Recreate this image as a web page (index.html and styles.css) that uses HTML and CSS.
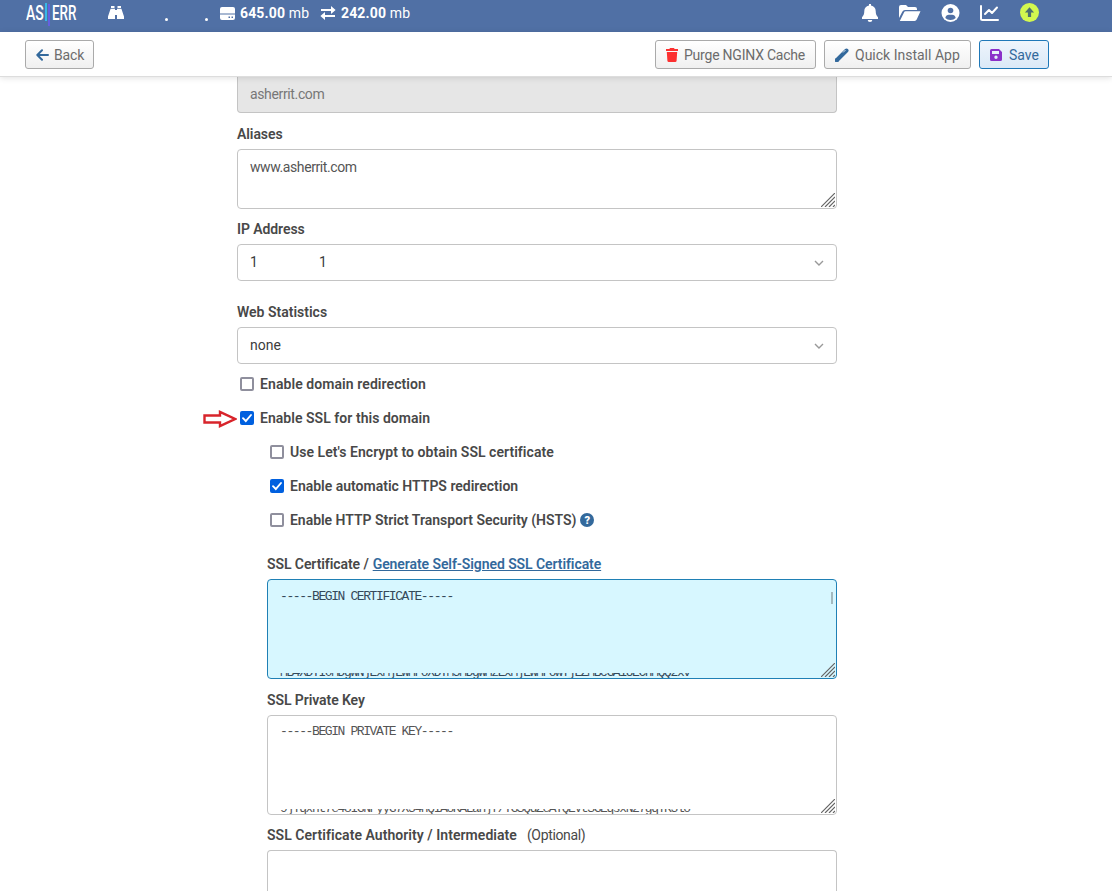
FILE: index.html
```html
<!DOCTYPE html>
<html lang="en">
<head>
<meta charset="utf-8">
<title>Edit Web Domain</title>
<link rel="stylesheet" href="styles.css">
</head>
<body>
<header class="topbar">
  <div class="logo"><span>AS</span><i class="bar cyan"></i><i class="bar violet"></i><span>ERR</span></div>
  <svg class="binoculars" width="16" height="14" viewBox="0 0 16 14"><path fill="#fff" d="M3 0h3.500v2H3zM9.500 0H13v2H9.500zM2.600 2.800H7V13H0v-2.500zM9 2.800h4.400L16 10.500V13H9zM7 4h2v5H7z"/></svg>
  <div class="dots"><i></i><i></i></div>
  <svg width="15" height="13" viewBox="0 0 15 13"><path fill="#fff" d="M2 0h11a2 2 0 0 1 2 2v4.500H0V2a2 2 0 0 1 2-2z"/><path fill="#fff" fill-rule="evenodd" d="M0 7.500h15V11a2 2 0 0 1-2 2H2a2 2 0 0 1-2-2zM8.500 9.500V11H10V9.500zM11.500 9.500V11H13V9.500z"/></svg>
  <span class="stat s1"><b>645.00</b> mb</span>
  <svg width="16" height="14" viewBox="0 0 16 14"><path fill="none" stroke="#fff" stroke-width="2" d="M1 4h13M15 10H2"/><path fill="#fff" d="M11 0l4.600 4L11 8zM5 6L.4 10 5 14z"/></svg>
  <span class="stat s2"><b>242.00</b> mb</span>
  <nav class="menu">
    <svg width="16" height="18" viewBox="0 0 16 18"><path fill="#fff" d="M7 0h2v1.500c3 .5 4.700 2.700 4.700 5.500 0 3 .8 4.600 2.300 6.300V15H0v-1.700C1.500 11.600 2.300 10 2.300 7 2.300 4.200 4 2 7 1.500zM5.700 16h4.600a2.300 2 0 0 1-4.600 0z"/></svg>
    <svg class="folder" width="22" height="16" viewBox="0 0 22 16"><path fill="#fff" d="M0 13V2a2 2 0 0 1 2-2h5l2 2h7a2 2 0 0 1 2 2v1H6a3 3 0 0 0-2.700 1.700zM.8 16L5 7.500A2 2 0 0 1 6.600 6.300H21.500L17.700 14.500A2.400 2.400 0 0 1 15.600 16z"/></svg>
    <svg class="user" width="19" height="18" viewBox="0 0 18 18"><circle cx="9" cy="9" r="9" fill="#fff"/><circle cx="9" cy="6.500" r="2.800" fill="#5070a5"/><path fill="#5070a5" d="M3.800 13.900c.5-2 1.800-3.200 3.600-3.200h3.200c1.800 0 3.100 1.200 3.600 3.200A7 7 0 0 1 9 16a7 7 0 0 1-5.200-2.100z"/></svg>
    <svg class="chart" width="19" height="16" viewBox="0 0 19 16"><path fill="none" stroke="#fff" stroke-width="2" stroke-linecap="round" stroke-linejoin="round" d="M1 1v12.500q0 1.500 1.500 1.500H18M5 9l4-4 3 3 5-5.500"/></svg>
    <svg class="up" width="19" height="19" viewBox="0 0 19 19"><circle cx="9.500" cy="9.500" r="9.500" fill="#d3f84f"/><path fill="#4d7070" d="M9.500 4.200l4.600 5.300h-3v4.500H7.900V9.500h-3z"/></svg>
  </nav>
</header>
<div class="toolbar">
  <button class="btn back"><svg width="13" height="12" viewBox="0 0 13 12"><path fill="none" stroke="#33699c" stroke-width="2" stroke-linecap="round" stroke-linejoin="round" d="M12 6H1.500M6 1.300L1.300 6 6 10.700"/></svg><span>Back</span></button>
  <div class="actions">
    <button class="btn purge"><svg width="12" height="14" viewBox="0 0 12 14"><path fill="#fc3030" d="M4 0h4l.6 1H12v2H0V1h3.400zM.8 4h10.400l-.6 8.700A1.400 1.400 0 0 1 9.200 14H2.800a1.400 1.400 0 0 1-1.400-1.300z"/></svg><span>Purge NGINX Cache</span></button>
    <button class="btn quick"><svg width="14" height="14" viewBox="0 0 14 14"><path fill="none" stroke="#33699c" stroke-width="4" d="M2 12L11.500 2.500" stroke-linecap="round"/><path fill="#33699c" d="M0 14l.6-4L4 13.400z"/><path stroke="#fff" stroke-width=".8" d="M8 4.500l2.500-2.500"/></svg><span>Quick Install App</span></button>
    <button class="btn save"><svg width="12" height="12" viewBox="0 0 12 12"><path fill="#8b2fc9" fill-rule="evenodd" d="M1.500 0H9l3 3v7.500a1.500 1.500 0 0 1-1.500 1.500h-9A1.500 1.500 0 0 1 0 10.500v-9A1.500 1.500 0 0 1 1.500 0zM2 2v3h7V2zM6 6.500a1.700 1.700 0 1 0 0 3.400 1.700 1.700 0 0 0 0-3.400z"/></svg><span>Save</span></button>
  </div>
</div>
<main class="form">
  <div class="box disabled"><span class="t-domain">asherrit.com</span></div>
  <div class="label l6"><span class="t-aliases">Aliases</span></div>
  <div class="box aliases"><span class="t-www">www.asherrit.com</span><svg class="grip" width="14" height="14"><path d="M0 14L14 0M4 14L14 4M8 14l6-6M12 14l2-2"/></svg></div>
  <div class="label l5"><span class="t-ip">IP Address</span></div>
  <div class="box select"><span class="ip-start">1</span><span class="ip-end">1</span><svg class="chev" width="10" height="6"><path d="M1 1l4 4 4-4"/></svg></div>
  <div class="label l16"><span class="t-stats">Web Statistics</span></div>
  <div class="box select"><span class="t-none">none</span><svg class="chev" width="10" height="6"><path d="M1 1l4 4 4-4"/></svg></div>
  <div class="checks">
    <label class="check"><i class="cb"></i><span class="t-redir">Enable domain redirection</span></label>
    <label class="check marked"><svg class="arrow" width="34" height="18" viewBox="0 0 34 18"><path d="M1.500 5.500H17V2L32 9 17 16v-3.500H1.500z"/></svg><i class="cb on"><svg width="14" height="14"><path d="M3 7.200l2.800 2.800L11 4"/></svg></i><span class="t-ssl">Enable SSL for this domain</span></label>
    <label class="check sub"><i class="cb"></i><span class="t-le">Use Let's Encrypt to obtain SSL certificate</span></label>
    <label class="check sub"><i class="cb on"><svg width="14" height="14"><path d="M3 7.200l2.800 2.800L11 4"/></svg></i><span class="t-https">Enable automatic HTTPS redirection</span></label>
    <label class="check sub"><i class="cb"></i><span class="t-hsts">Enable HTTP Strict Transport Security (HSTS)</span><b class="help">?</b></label>
  </div>
  <section class="ssl">
    <div class="label l12"><span class="t-cert">SSL Certificate /</span><a class="t-gen">Generate Self-Signed SSL Certificate</a></div>
    <div class="box pem focus"><span class="mono">-----BEGIN CERTIFICATE-----</span><div class="clip"><span class="mono">MB4XDTI0MDgwNjExMjEwMFoXDTM5MDgwMzExMjEwMFowYjEZMBcGA1UEChMQQ2xv</span></div><i class="thumb"></i><svg class="grip" width="14" height="14"><path d="M0 14L14 0M4 14L14 4M8 14l6-6M12 14l2-2"/></svg></div>
    <div class="label l6"><span class="t-key">SSL Private Key</span></div>
    <div class="box pem"><span class="mono">-----BEGIN PRIVATE KEY-----</span><div class="clip"><span class="mono">9jTqxnt7e48IGNFyyG7X34nQIA8KALanjf/YGSQdZeAYQEVtSGEqsxN27gqTK3lo</span></div><svg class="grip" width="14" height="14"><path d="M0 14L14 0M4 14L14 4M8 14l6-6M12 14l2-2"/></svg></div>
    <div class="label l5"><span class="t-ca">SSL Certificate Authority / Intermediate</span><span class="opt">(Optional)</span></div>
    <div class="box pem last"></div>
  </section>
</main>
</body>
</html>
```
FILE: styles.css
```css
* { box-sizing: border-box; }
body { margin: 0; height: 891px; overflow: hidden; background: #fff; color: #4a4a4a; font-family: Roboto, "Liberation Sans", sans-serif; font-size: 14px; }
svg { display: block; flex: none; }
i { font-style: normal; }
span, a { white-space: nowrap; }

.topbar { display: flex; align-items: center; height: 32px; padding: 0 73px 6px 26px; background: #5070a5; color: #fff; }
.logo { display: flex; align-items: center; width: 53px; height: 26px; font-size: 20px; font-weight: 500; line-height: 24px; }
.logo span { display: block; flex: none; transform: scaleX(.7); transform-origin: left; width: 19px; }
.logo span:last-child { width: 26px; transform: scaleX(.67); }
.bar { flex: none; width: 2px; height: 18px; margin: 0 1px 2px 0; background: #38b8e8; }
.bar.violet { height: 22px; margin: 4px 2px 0 0; background: #6460e0; }
.binoculars { margin-left: 29px; }
.dots { display: flex; gap: 37px; width: 96px; padding: 13px 0 0 41px; }
.dots i { width: 3px; height: 3px; border-radius: 50%; background: #fff; }
.stat { margin-left: 5px; line-height: 26px; letter-spacing: .15px; }
.s1 { width: 80px; }
.s2 { width: 80px; }
.menu { display: flex; align-items: center; margin-left: auto; }
.folder { margin-left: 21px; }
.user { margin-left: 20px; }
.chart { margin-left: 20px; }
.up { margin: -1px 0 0 21px; }

.toolbar { position: relative; z-index: 1; display: flex; justify-content: space-between; height: 45px; padding: 8px 63px 0 25px; background: #fff; border-bottom: 1px solid #ddd; box-shadow: 0 1px 6px rgba(0,0,0,.12); }
.actions { display: flex; gap: 8px; }
.btn { display: flex; align-items: center; height: 29px; padding: 0 0 0 10px; border: 1px solid #aaa; border-radius: 3px; background: linear-gradient(#fff, #f0f0f0); color: #6c6c6c; font: 14px Roboto, sans-serif; }
.back { width: 69px; gap: 5px; letter-spacing: -.15px; }
.purge { width: 161px; gap: 6px; letter-spacing: -.22px; }
.quick { width: 147px; gap: 6px; }
.save { width: 70px; gap: 7px; color: #33699c; border-color: #1f78b8; background: linear-gradient(#eef5fc, #dbe9f7); }

.form { width: 600px; margin-left: 237px; }
.box { position: relative; display: flex; border: 1px solid #c4c4c4; border-radius: 4px; background: #fff; padding-left: 12px; color: #555; }
.disabled { height: 36px; align-items: center; border-top: 0; border-radius: 0 0 4px 4px; padding-bottom: 2px; background: #e6e6e6; color: #777; }
.t-domain { letter-spacing: -.36px; }
.t-www { letter-spacing: -.4px; }
.aliases { height: 60px; padding-top: 9px; }
.select { height: 37px; align-items: center; color: #3c3c3c; }
.select span { margin-bottom: 2px; }
.ip-start { width: 69px; }
.chev { margin: 0 12px 0 auto; fill: none; stroke: #999; stroke-width: 1.4; }
.grip { position: absolute; right: 1px; bottom: 1px; fill: none; stroke: #666; stroke-width: 1.2; }
.label { display: flex; align-items: center; height: 30px; font-weight: 600; color: #484848; }
.l5 { margin-top: 5px; }
.l6 { margin-top: 6px; }
.l12 { margin-top: 12px; }
.l16 { margin-top: 16px; }
.t-aliases, .t-ip, .t-key, .t-cert { letter-spacing: -.08px; }
.t-ca { letter-spacing: .05px; }

.checks { margin-top: 3px; }
.check { display: flex; align-items: center; height: 34px; padding-left: 3px; font-weight: 600; color: #484848; }
.sub { padding-left: 33px; }
.marked { position: relative; }
.t-redir { letter-spacing: .08px; }
.t-ssl, .t-le { letter-spacing: .04px; }
.t-hsts { letter-spacing: -.025px; }
.arrow { position: absolute; left: -34px; top: 9px; fill: #fff; stroke: #d8242b; stroke-width: 2.4; }
.cb { flex: none; width: 14px; height: 14px; margin-right: 6px; border: 2px solid #8f8f9d; border-radius: 2px; }
.cb.on { border: 0; background: #0060df; }
.cb path { fill: none; stroke: #fff; stroke-width: 1.9; stroke-linecap: round; }
.help { display: flex; align-items: center; justify-content: center; width: 14px; height: 14px; margin-left: 4px; border-radius: 50%; background: #33699c; color: #fff; font-size: 11px; }

.ssl { margin-left: 30px; }
.pem { height: 100px; flex-direction: column; justify-content: space-between; padding-top: 8px; overflow: hidden; }
.last { height: 41px; border-bottom: 0; border-radius: 4px 4px 0 0; }
.focus { padding-top: 9px; background: #d7f7ff; border-color: #1f80b5; color: #34495a; }
.mono { display: block; font: 13px/16px "Liberation Mono", monospace; letter-spacing: -1.4px; }
.clip { height: 5px; overflow: hidden; }
.clip .mono { margin-top: -8px; }
.thumb { position: absolute; right: 3px; top: 12px; width: 2px; height: 12px; background: #a3b9bf; }
.t-gen { margin-left: 4px; color: #33699c; text-decoration: underline; letter-spacing: -.08px; }
.opt { margin-left: 10px; font-weight: 400; letter-spacing: -.35px; }
```
